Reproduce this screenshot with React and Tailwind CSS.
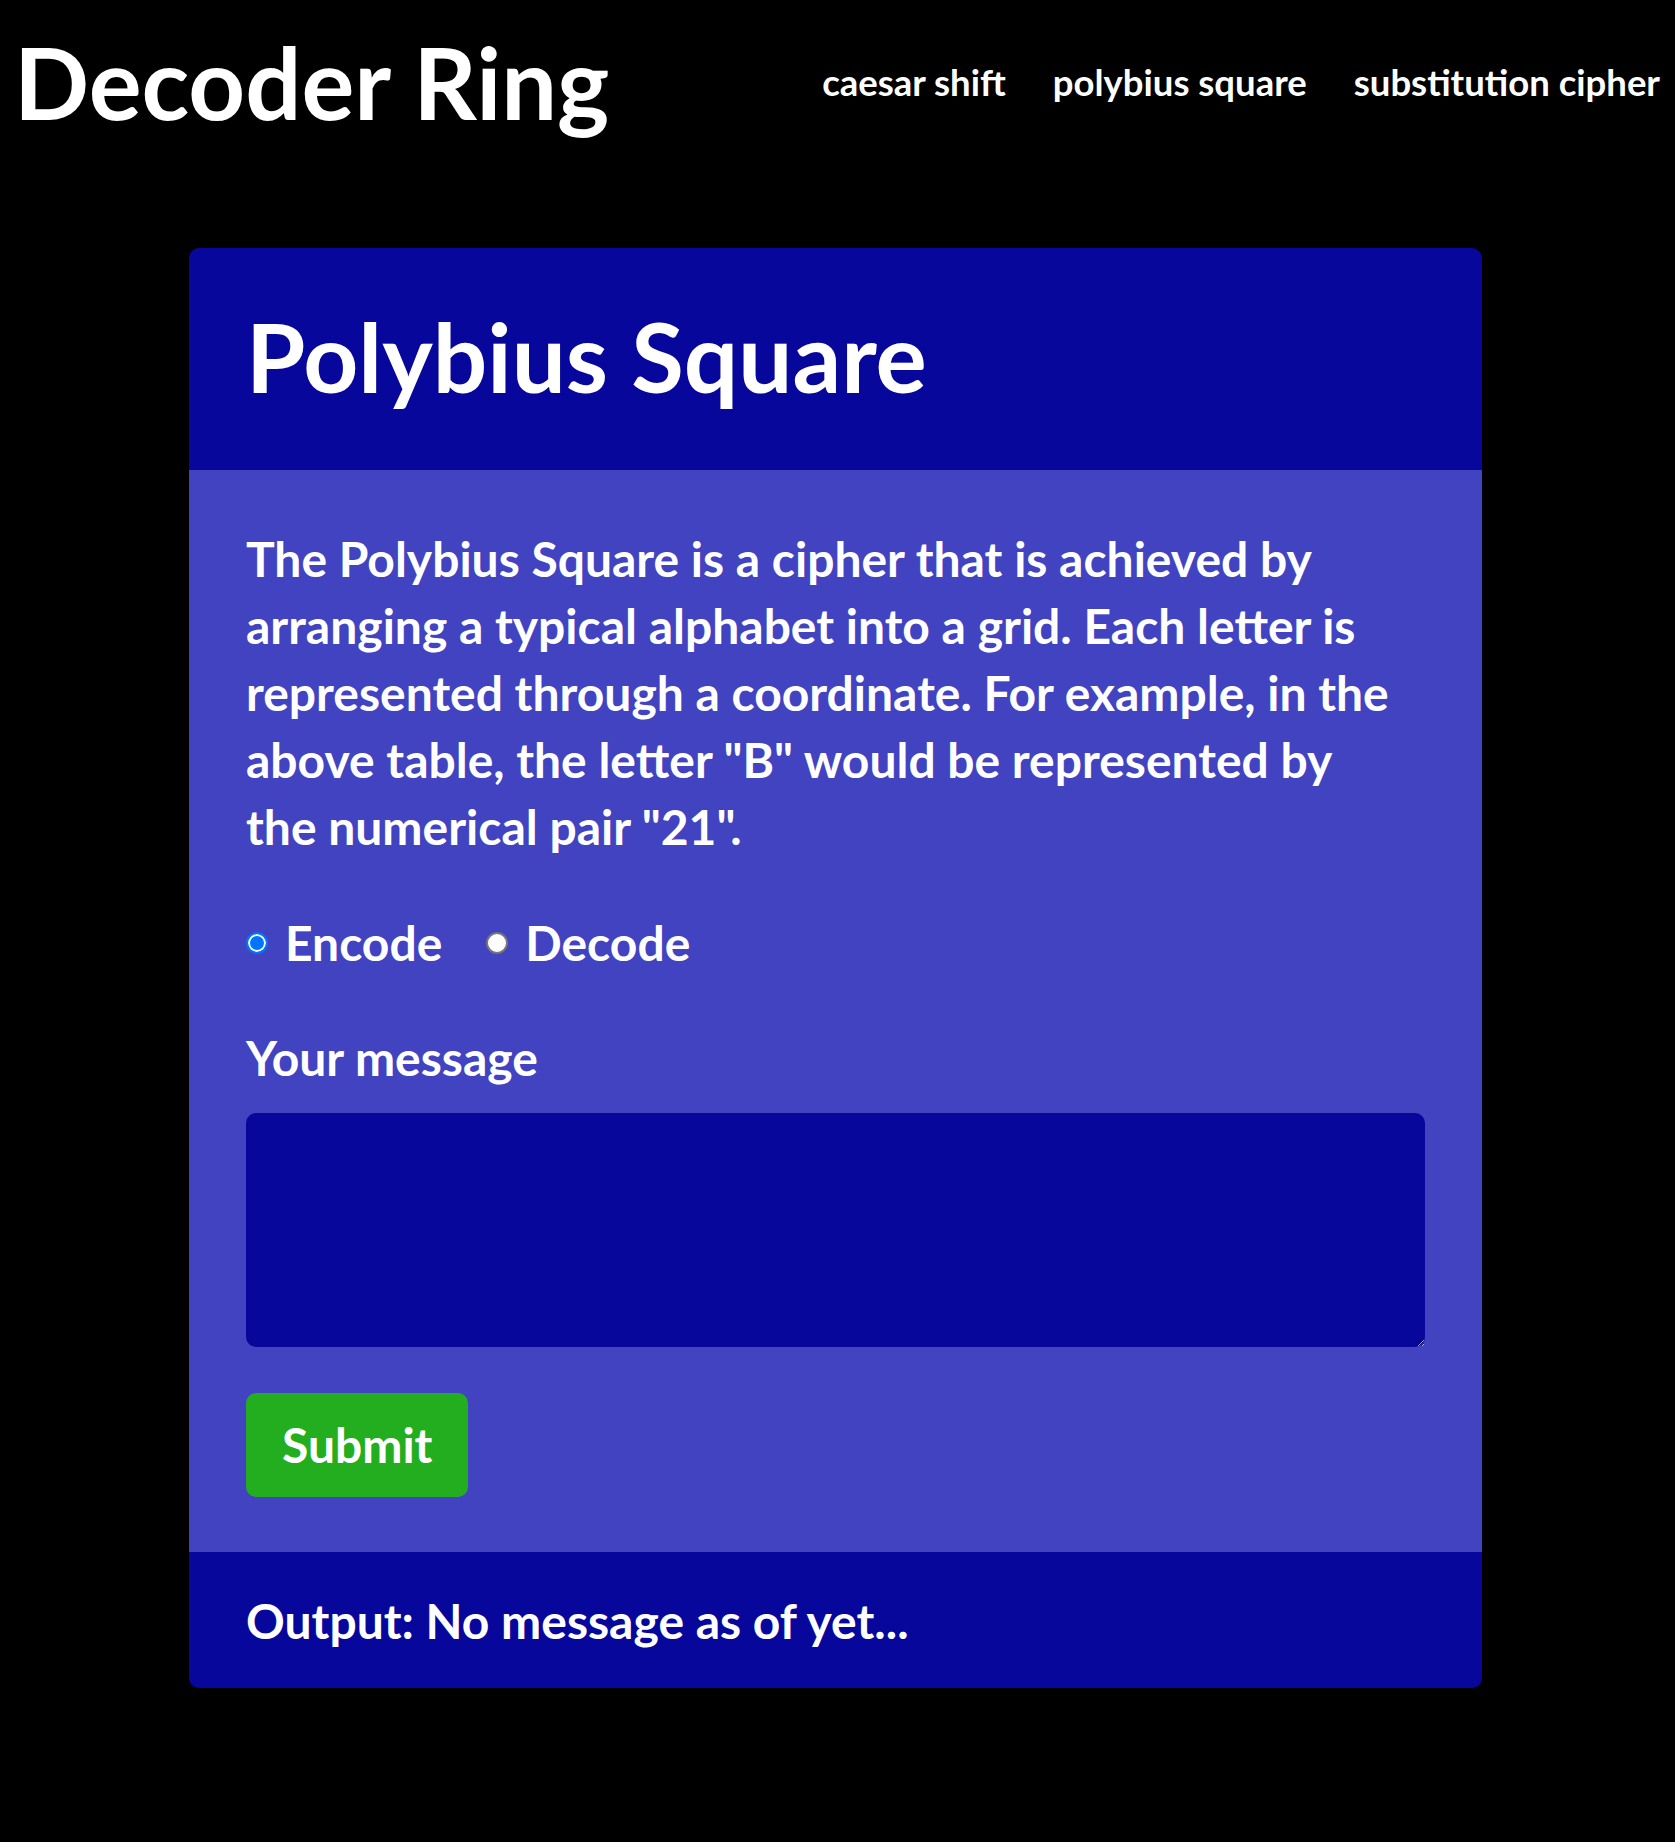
import { useState } from 'react';

export default function App() {
  const [mode, setMode] = useState('encode');
  const [message, setMessage] = useState('');

  const radioClass =
    'appearance-none w-[22px] h-[22px] m-0 rounded-full bg-white border-[2px] border-[#767676] checked:bg-[#0075ff] checked:border-[#0075ff] checked:shadow-[inset_0_0_0_2px_white]';

  return (
    <div className="min-h-[1842px] bg-black text-white font-[Lato,'Open_Sans',sans-serif] font-bold">
      <header className="flex justify-between items-start pl-[14px] pr-[15px] pt-[23px]">
        <h1 className="text-[99px] leading-[1.2] font-bold">Decoder Ring</h1>
        <nav className="flex gap-[47px] pt-[38px] text-[36.5px] leading-[1.2]">
          <a href="#caesar">caesar shift</a>
          <a href="#polybius">polybius square</a>
          <a href="#substitution">substitution cipher</a>
        </nav>
      </header>

      <main className="ml-[189px] mt-[106px] w-[1293px] rounded-[10px] overflow-hidden">
        <div className="bg-[#07079b] px-[57px] pt-[50px] pb-[57px]">
          <h2 className="text-[96px] leading-[1.2] font-bold">Polybius Square</h2>
        </div>

        <form
          className="bg-[#4143c1] px-[57px] pt-[55px] pb-[55px]"
          onSubmit={(e) => e.preventDefault()}
        >
          <p className="text-[48px] leading-[67px] pr-[22px]">
            The Polybius Square is a cipher that is achieved by arranging a typical alphabet into a grid. Each letter is
            represented through a coordinate. For example, in the above table, the letter "B" would be represented by
            the numerical pair "21".
          </p>

          <div className="flex items-center mt-[54px] text-[48px] leading-[1.2]">
            <label className="flex items-center gap-[17px] mr-[44px]">
              <input
                type="radio"
                name="mode"
                checked={mode === 'encode'}
                onChange={() => setMode('encode')}
                className={radioClass}
              />
              Encode
            </label>
            <label className="flex items-center gap-[17px]">
              <input
                type="radio"
                name="mode"
                checked={mode === 'decode'}
                onChange={() => setMode('decode')}
                className={radioClass}
              />
              Decode
            </label>
          </div>

          <label htmlFor="message" className="block mt-[57px] text-[48px] leading-[1.2]">
            Your message
          </label>
          <textarea
            id="message"
            value={message}
            onChange={(e) => setMessage(e.target.value)}
            className="block w-full h-[234px] mt-[27px] bg-[#07079b] rounded-[10px] text-white text-[40px] p-4 outline-none"
          />

          <button
            type="submit"
            className="mt-[46px] h-[104px] px-[36px] bg-[#23ae20] rounded-[10px] text-[48px] leading-[1.2] font-bold"
          >
            Submit
          </button>
        </form>

        <div className="bg-[#07079b] px-[57px] pt-[40px] pb-[38px]">
          <p className="text-[48px] leading-[1.2]">Output: No message as of yet...</p>
        </div>
      </main>
    </div>
  );
}
